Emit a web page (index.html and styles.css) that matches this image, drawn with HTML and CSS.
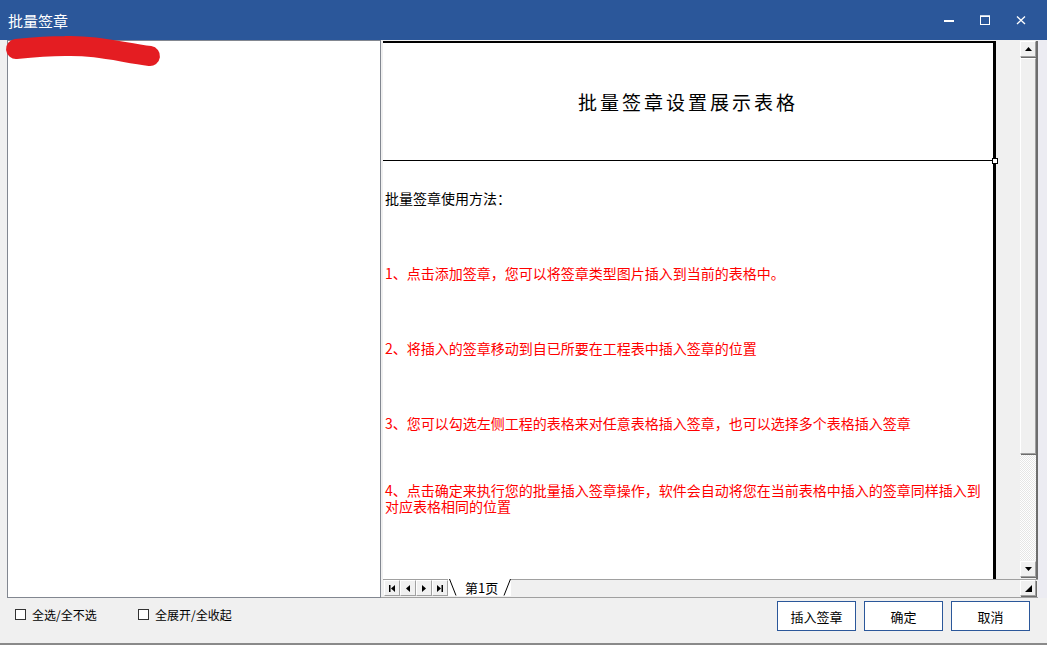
FILE: index.html
```html
<!DOCTYPE html>
<html lang="zh-CN">
<head>
    <meta charset="UTF-8">
    <title>批量签章</title>
    <link rel="stylesheet" href="styles.css">
</head>
<body>
    <div class="titlebar">
        <span class="title">批量签章</span>
        <div class="win-btns">
            <svg class="wicon" width="10" height="10" viewBox="0 0 10 10"><rect x="0" y="5" width="10" height="2" fill="#fff"/></svg>
            <svg class="wicon" width="10" height="10" viewBox="0 0 10 10"><rect x="0.5" y="1" width="9" height="8.5" fill="none" stroke="#fff" stroke-width="1"/><rect x="0" y="0.5" width="10" height="1.5" fill="#fff"/></svg>
            <svg class="wicon" width="10" height="10" viewBox="0 0 10 10"><path d="M1 1.5 L9 9 M9 1.5 L1 9" stroke="#fff" stroke-width="1.3"/></svg>
        </div>
    </div>

    <div class="main">
        <div class="tree">
            <svg class="redact" width="170" height="45" viewBox="0 0 170 45">
                <path d="M16 19 C35 17 45 16 65 16 C95 15 120 22 150 26" fill="none" stroke="#e41d22" stroke-width="20" stroke-linecap="round"/>
            </svg>
        </div>

        <div class="viewer">
            <div class="sheet">
                <div class="page">
                    <div class="head-cell">批量签章设置展示表格<i class="handle"></i></div>
                    <div class="row">批量签章使用方法：</div>
                    <div class="row red">1、点击添加签章，您可以将签章类型图片插入到当前的表格中。</div>
                    <div class="row red">2、将插入的签章移动到自已所要在工程表中插入签章的位置</div>
                    <div class="row red">3、您可以勾选左侧工程的表格来对任意表格插入签章，也可以选择多个表格插入签章</div>
                    <div class="row red multi">
                        <span class="line">4、点击确定来执行您的批量插入签章操作，软件会自动将您在当前表格中插入的签章同样插入到</span>
                        <span class="line">对应表格相同的位置</span>
                    </div>
                </div>
                <div class="gutter"></div>
                <div class="vscroll">
                    <div class="sbtn"><svg width="7" height="4" viewBox="0 0 7 4"><path d="M3.5 0 L7 4 L0 4 Z" fill="#000"/></svg></div>
                    <div class="thumb"></div>
                    <div class="track"></div>
                    <div class="sbtn"><svg width="7" height="4" viewBox="0 0 7 4"><path d="M0 0 L7 0 L3.5 4 Z" fill="#000"/></svg></div>
                </div>
            </div>
            <div class="tabbar">
                <div class="nav">
                    <span class="nbtn"><svg width="6" height="7" viewBox="0 0 6 7"><rect x="0" y="0" width="1.5" height="7"/><path d="M6 0 L2 3.5 L6 7 Z"/></svg></span>
                    <span class="nbtn"><svg width="4" height="7" viewBox="0 0 4 7"><path d="M4 0 L0 3.5 L4 7 Z"/></svg></span>
                    <span class="nbtn"><svg width="4" height="7" viewBox="0 0 4 7"><path d="M0 0 L4 3.5 L0 7 Z"/></svg></span>
                    <span class="nbtn"><svg width="6" height="7" viewBox="0 0 6 7"><path d="M0 0 L4 3.5 L0 7 Z"/><rect x="4.5" y="0" width="1.5" height="7"/></svg></span>
                </div>
                <div class="tab">
                    <svg width="8" height="17" viewBox="0 0 8 17"><path d="M0.5 0 L7 16.5" stroke="#000" stroke-width="1"/></svg>
                    <span class="tab-text">第1页</span>
                    <svg width="8" height="17" viewBox="0 0 8 17"><path d="M1 16.5 L7.5 0" stroke="#000" stroke-width="1"/></svg>
                </div>
                <div class="tab-rest"></div>
                <div class="corner"><svg width="7" height="7" viewBox="0 0 7 7"><path d="M7 0 L7 7 L0 7 Z" fill="#000"/></svg></div>
            </div>
        </div>
        <div class="edge"></div>
    </div>

    <div class="footer">
        <div class="checks">
            <label class="check"><span class="box"></span>全选/全不选</label>
            <label class="check"><span class="box"></span>全展开/全收起</label>
        </div>
        <div class="actions">
            <button class="btn">插入签章</button>
            <button class="btn">确定</button>
            <button class="btn">取消</button>
        </div>
    </div>
</body>
</html>
```

FILE: styles.css
```css
body {
    margin: 0;
    width: 1047px;
    height: 645px;
    overflow: hidden;
    background: #f0f0f0;
    font-family: "Noto Sans CJK SC", "Liberation Sans", sans-serif;
}

.titlebar {
    height: 40px;
    background: #2b579a;
    display: flex;
    align-items: center;
    justify-content: space-between;
    color: #fff;
}

.title {
    font-size: 15px;
    margin-left: 8px;
}

.win-btns {
    display: flex;
    gap: 26px;
    padding-right: 21px;
}

.wicon {
    display: block;
}

.main {
    display: flex;
    height: 558px;
    padding-left: 7px;
}

.tree {
    width: 374px;
    box-sizing: border-box;
    border: 1px solid #828790;
    background: #fff;
    position: relative;
}

.redact {
    position: absolute;
    left: -8px;
    top: -11px;
    overflow: visible;
}

.viewer {
    width: 657px;
    box-sizing: border-box;
    padding-left: 2px;
    padding-top: 1px;
    display: flex;
    flex-direction: column;
    border-bottom: 1px solid #a0a0a0;
}

.sheet {
    height: 539px;
    display: flex;
}

.page {
    width: 613px;
    box-sizing: border-box;
    background: #fff;
    border-top: 2px solid #000;
    border-right: 3px solid #000;
    font-size: 14px;
    color: #000;
}

.head-cell {
    height: 117px;
    border-bottom: 1px solid #000;
    display: flex;
    align-items: center;
    justify-content: center;
    font-size: 19px;
    letter-spacing: 3px;
    position: relative;
}

.handle {
    position: absolute;
    right: -5px;
    bottom: -4px;
    width: 4px;
    height: 4px;
    border: 1px solid #000;
    background: #fff;
}

.row {
    height: 75px;
    display: flex;
    align-items: center;
    padding-left: 2px;
    line-height: 15px;
}

.multi {
    flex-direction: column;
    align-items: flex-start;
    justify-content: center;
    gap: 1px;
}

.line {
    display: block;
    height: 15px;
    line-height: 15px;
}

.red {
    color: #ff0000;
}

.gutter {
    flex: 1;
    background: #f0f0f0;
}

.vscroll {
    width: 18px;
    display: flex;
    flex-direction: column;
    padding-bottom: 2px;
    box-sizing: border-box;
    border-right: 2px solid #6d6d6d;
}

.sbtn, .corner {
    width: 16px;
    height: 16px;
    box-sizing: border-box;
    background: #f0f0f0;
    border: 1px solid;
    border-color: #fff #a0a0a0 #a0a0a0 #fff;
    box-shadow: 1px 1px 0 #6d6d6d;
    display: flex;
    align-items: center;
    justify-content: center;
}

.thumb {
    height: 396px;
    margin-top: 1px;
    width: 16px;
    box-sizing: border-box;
    background: #f0f0f0;
    border: 1px solid;
    border-color: #fff #a0a0a0 #a0a0a0 #fff;
    box-shadow: 1px 1px 0 #6d6d6d;
}

.track {
    flex: 1;
    margin: 1px 0;
    background: #fff repeating-conic-gradient(#e6e6e6 0 25%, #fff 0 50%) 0 0 / 2px 2px;
}

.tabbar {
    height: 17px;
    display: flex;
    align-items: stretch;
    border-top: 1px solid #a0a0a0;
    background: #f0f0f0;
}

.nav {
    display: flex;
    padding-left: 1px;
}

.nbtn {
    width: 16px;
    height: 16px;
    box-sizing: border-box;
    border: 1px solid;
    border-color: #fff #a0a0a0 #a0a0a0 #fff;
    display: flex;
    align-items: center;
    justify-content: center;
    fill: #000;
}

.tab {
    display: flex;
    align-items: center;
    background: #fff;
    margin-top: -1px;
    height: 17px;
    padding-left: 1px;
}

.tab-text {
    font-size: 13px;
    padding: 0 5px 0 8px;
    line-height: 16px;
}

.tab-rest {
    flex: 1;
}

.corner {
    margin-right: 2px;
}

.edge {
    width: 9px;
    background: #ececf2;
}

.footer {
    height: 47px;
    display: flex;
    justify-content: space-between;
    padding: 3px 17px 0 15px;
    box-sizing: border-box;
    border-bottom: 2px solid #8a8a8a;
}

.checks {
    display: flex;
    margin-top: 6px;
}

.check {
    display: flex;
    align-items: center;
    font-size: 12px;
    color: #000;
    height: 14px;
    width: 123px;
}

.box {
    width: 9px;
    height: 9px;
    border: 1px solid #333;
    background: #fff;
    margin-right: 6px;
}

.actions {
    display: flex;
    gap: 8px;
}

.btn {
    width: 79px;
    height: 30px;
    border: 1px solid #2b579a;
    background: #fff;
    font-family: inherit;
    font-size: 13px;
    color: #000;
    padding: 0;
}
```
